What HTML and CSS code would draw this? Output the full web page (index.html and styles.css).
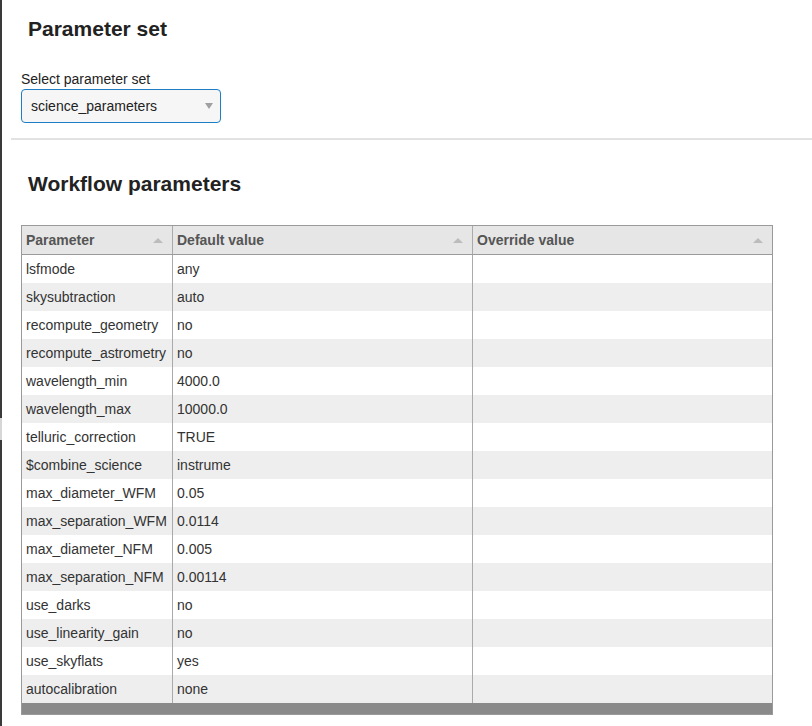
FILE: index.html
```html
<!DOCTYPE html>
<html>
<head>
<meta charset="utf-8">
<link rel="stylesheet" href="styles.css">
</head>
<body>
<div class="page">
  <div class="edge"><div class="edge-top"></div><div class="edge-gap"></div><div class="edge-bottom"></div></div>
  <div class="main">
    <section class="section first">
      <h2 class="title">Parameter set</h2>
      <label class="label">Select parameter set</label>
      <div class="select">
        <span>science_parameters</span>
        <span class="caret"></span>
      </div>
    </section>
    <div class="rule"></div>
    <section class="section">
      <h2 class="title">Workflow parameters</h2>
      <div class="table">
        <div class="row head">
          <div class="cell c1">Parameter<span class="sort"></span></div>
          <div class="cell c2">Default value<span class="sort"></span></div>
          <div class="cell c3">Override value<span class="sort"></span></div>
        </div>
        <div class="row"><div class="cell c1">lsfmode</div><div class="cell c2">any</div><div class="cell c3"></div></div>
        <div class="row"><div class="cell c1">skysubtraction</div><div class="cell c2">auto</div><div class="cell c3"></div></div>
        <div class="row"><div class="cell c1">recompute_geometry</div><div class="cell c2">no</div><div class="cell c3"></div></div>
        <div class="row"><div class="cell c1">recompute_astrometry</div><div class="cell c2">no</div><div class="cell c3"></div></div>
        <div class="row"><div class="cell c1">wavelength_min</div><div class="cell c2">4000.0</div><div class="cell c3"></div></div>
        <div class="row"><div class="cell c1">wavelength_max</div><div class="cell c2">10000.0</div><div class="cell c3"></div></div>
        <div class="row"><div class="cell c1">telluric_correction</div><div class="cell c2">TRUE</div><div class="cell c3"></div></div>
        <div class="row"><div class="cell c1">$combine_science</div><div class="cell c2">instrume</div><div class="cell c3"></div></div>
        <div class="row"><div class="cell c1">max_diameter_WFM</div><div class="cell c2">0.05</div><div class="cell c3"></div></div>
        <div class="row"><div class="cell c1">max_separation_WFM</div><div class="cell c2">0.0114</div><div class="cell c3"></div></div>
        <div class="row"><div class="cell c1">max_diameter_NFM</div><div class="cell c2">0.005</div><div class="cell c3"></div></div>
        <div class="row"><div class="cell c1">max_separation_NFM</div><div class="cell c2">0.00114</div><div class="cell c3"></div></div>
        <div class="row"><div class="cell c1">use_darks</div><div class="cell c2">no</div><div class="cell c3"></div></div>
        <div class="row"><div class="cell c1">use_linearity_gain</div><div class="cell c2">no</div><div class="cell c3"></div></div>
        <div class="row"><div class="cell c1">use_skyflats</div><div class="cell c2">yes</div><div class="cell c3"></div></div>
        <div class="row"><div class="cell c1">autocalibration</div><div class="cell c2">none</div><div class="cell c3"></div></div>
        <div class="footer"></div>
      </div>
    </section>
  </div>
</div>
</body>
</html>
```
FILE: styles.css
```css
html, body {
  margin: 0;
  padding: 0;
  background: #fff;
  font-family: "Liberation Sans", Arial, sans-serif;
  color: #333;
}
.page {
  display: flex;
  min-height: 726px;
  height: 726px;
  overflow: hidden;
}
.edge {
  width: 2px;
  display: flex;
  flex-direction: column;
  flex-shrink: 0;
}
.edge-top { height: 418px; background: #3a3a3a; }
.edge-gap { height: 22px; background: #d6d6d6; }
.edge-bottom { flex: 1; background: #3a3a3a; }
.main {
  flex: 1;
  margin-left: 9px;
}
.section {
  padding-left: 10px;
}
.title {
  margin: 0;
  padding-left: 7px;
  font-size: 21px;
  font-weight: bold;
  color: #222;
  line-height: 24px;
}
.first .title {
  padding-top: 17px;
}
.label {
  display: block;
  margin-top: 30px;
  font-size: 14px;
  line-height: 16px;
  color: #222;
}
.select {
  margin-top: 2px;
  width: 198px;
  height: 32px;
  border: 1px solid #1d7ec6;
  border-radius: 4px;
  background: #f6f6f6;
  box-sizing: content-box;
  display: flex;
  align-items: center;
  justify-content: space-between;
  padding: 0;
  font-size: 14px;
  color: #222;
}
.select span:first-child {
  padding-left: 9px;
}
.caret {
  width: 0;
  height: 0;
  border-left: 4px solid transparent;
  border-right: 4px solid transparent;
  border-top: 6px solid #a0a0a0;
  margin-right: 7px;
}
.rule {
  margin-top: 15px;
  height: 2px;
  background: #e2e2e2;
}
.section:not(.first) .title {
  padding-top: 32px;
}
.table {
  margin-top: 29px;
  width: 750px;
  border: 1px solid #9a9a9a;
  font-size: 14px;
}
.row {
  display: flex;
  height: 28px;
}
.row:nth-child(odd) {
  background: #eeeeee;
}
.row.head {
  background: #e6e6e6;
  height: 28px;
  border-bottom: 1px solid #9a9a9a;
  font-weight: bold;
  color: #555;
}
.cell {
  display: flex;
  align-items: center;
  padding-left: 4px;
  box-sizing: border-box;
  position: relative;
}
.c1 { width: 151px; border-right: 1px solid #aaa; }
.c2 { width: 300px; border-right: 1px solid #aaa; }
.c3 { width: 299px; }
.head .cell {
  justify-content: space-between;
  padding-right: 9px;
}
.sort {
  width: 0;
  height: 0;
  border-left: 5px solid transparent;
  border-right: 5px solid transparent;
  border-bottom: 5px solid #bcbcbc;
}
.footer {
  height: 10px;
  background: #8a8a8a;
  border-top: 1px solid #8a8a8a;
}
```
